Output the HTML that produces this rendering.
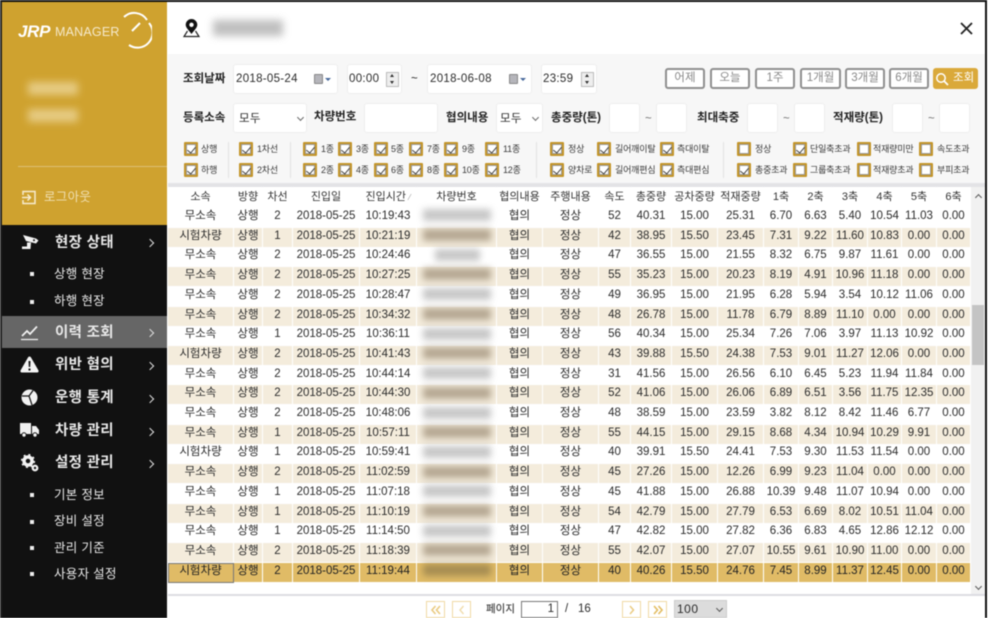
<!DOCTYPE html>
<html lang="ko"><head><meta charset="utf-8"><title>JRP Manager</title>
<style>
*{box-sizing:border-box;margin:0;padding:0}
html,body{width:989px;height:618px;overflow:hidden;background:#fff}
body{position:relative;font:11.5px "Liberation Sans","Noto Sans CJK KR",sans-serif;color:#2b2b2b}
#w{position:absolute;left:0;top:0;width:989px;height:618px;overflow:hidden;filter:blur(.4px)}
#w div,#w span,#w b,#w svg{position:absolute}
.m{left:55px;color:#e8e8e8;font-size:14.5px;font-weight:700;line-height:20px;white-space:nowrap;letter-spacing:.3px}
.s{left:54px;color:#e8e8e8;font-size:12.5px;line-height:18px;white-space:nowrap;letter-spacing:.3px}
.d{left:30px;width:4px;height:4px;background:#eee}
.c{left:147px;width:6px;height:6px;border-top:1.6px solid #ddd;border-right:1.6px solid #ddd;transform:rotate(45deg)}
.f{background:#fff;border:1px solid #eee;border-radius:3px}
.l{font-weight:700;font-size:11.5px;line-height:16px;color:#222;white-space:nowrap}
.v{font-size:11.5px;line-height:16px;color:#2b2b2b;white-space:nowrap;letter-spacing:.3px}
.b{top:68px;height:21px;border:2px solid #8f8f8f;border-radius:3px;background:#fff;color:#888;font-size:11.5px;line-height:17px;text-align:center}
.k{width:14px;height:14px;border:2px solid #c4952a;background:#fff;border-radius:1px;box-shadow:inset 0 0 0 1px #999}
.k.o:after{content:"";position:absolute;left:3px;top:.5px;width:4px;height:7px;border-right:1.3px solid #444;border-bottom:1.3px solid #444;transform:rotate(40deg)}
.t{font-size:9px;line-height:12px;color:#3a3a3a;white-space:nowrap;letter-spacing:-.2px}
.vl{top:142px;width:1px;height:36px;background:#e2e2e2}
.h,.r{left:168px;width:803px;height:20px;display:flex}
.h i,.r i{display:block;font-style:normal;text-align:center;line-height:17px;border-right:1px solid #fff;border-bottom:1px solid #fff;overflow:hidden;white-space:nowrap;flex:none;color:#2b2b2b}
.h i{font-size:11px;line-height:20px;color:#333}
.r.e i{background:#f4ecdc}
.r.x i{background:#e0bb66;color:#222}
i:nth-child(1){width:66px}i:nth-child(2){width:29px}i:nth-child(3){width:30px}i:nth-child(4){width:67px}i:nth-child(5){width:57px}i:nth-child(6){width:80px}i:nth-child(7){width:46px}i:nth-child(8){width:56px}i:nth-child(9){width:32px}i:nth-child(10){width:41px}i:nth-child(11){width:46px}i:nth-child(12){width:46px}i:nth-child(13){width:35px}i:nth-child(14){width:34px}i:nth-child(15){width:35px}i:nth-child(16){width:34px}i:nth-child(17){width:35px}i:nth-child(18){width:34px}
.bl{left:423px;width:68px;height:12px;background:#b0b0b0;filter:blur(3.5px);opacity:.7}
.t2{background:#9c8c74}
.pg{top:601px;width:19px;height:17px;border:1.5px solid #f0d9a4;background:#fff}
.pg svg{left:4px;top:3px}
</style></head><body><div id="w">

<div style="left:0;top:0;width:985px;height:2px;background:#111"></div>
<div style="left:0;top:0;width:2px;height:618px;background:#222"></div>
<div style="left:985px;top:0;width:2px;height:618px;background:#111"></div>

<!-- sidebar -->
<div style="left:2px;top:2px;width:165px;height:616px;background:#111"></div>
<div style="left:2px;top:2px;width:165px;height:223px;background:#cfa22f"></div>
<span style="left:18px;top:21px;color:#fff;font:italic 700 17px/22px 'Liberation Sans',sans-serif;letter-spacing:-.3px">JRP</span>
<span style="left:55px;top:23px;color:#f5e9cb;font-size:12.5px;line-height:18px;letter-spacing:.2px">MANAGER</span>
<svg style="left:120px;top:10px" width="32" height="40" viewBox="0 0 32 40"><path d="M4 7A15 15 0 0 1 27 10M29 13A15 15 0 0 1 9 35" fill="none" stroke="#fff" stroke-width="2"/><path d="M12 21L20 13" stroke="#fff" stroke-width="2"/></svg>
<div style="left:28px;top:82px;width:50px;height:13px;background:#eed9a0;filter:blur(4px);opacity:.75"></div>
<div style="left:28px;top:109px;width:50px;height:13px;background:#eed9a0;filter:blur(4px);opacity:.75"></div>
<div style="left:18px;top:166px;width:149px;height:1px;background:#dcbf75"></div>
<svg style="left:21px;top:190px" width="16" height="15" viewBox="0 0 16 15"><path d="M2 5V1.500H14V13.500H2V10M1 7.500H9M6.500 4.500L9.500 7.500L6.500 10.500" fill="none" stroke="#f7eccf" stroke-width="1.500"/></svg>
<span style="left:44px;top:189px;color:#f0dfb2;font-size:12.500px;line-height:17px;letter-spacing:.3px">로그아웃</span>

<svg style="left:21px;top:234px" width="18" height="17" viewBox="0 0 18 17"><path d="M2 1L15 4.500L17.500 6.500L15 9.500L5 7Z" fill="#f2f2f2"/><path d="M6 8.500H10L9.500 15H1V12.500H6Z" fill="#f2f2f2"/><circle cx="13" cy="6.300" r="1" fill="#111"/></svg>
<span class="m" style="top:233px">현장 상태</span><div class="c" style="top:240px"></div>
<div class="d" style="top:272px"></div><span class="s" style="top:265px">상행 현장</span>
<div class="d" style="top:300px"></div><span class="s" style="top:292px">하행 현장</span>

<div style="left:2px;top:316px;width:165px;height:32px;background:#666"></div>
<svg style="left:20px;top:325px" width="19" height="16" viewBox="0 0 19 16"><path d="M2 11L7 6L10 9L17 1.500" fill="none" stroke="#f2f2f2" stroke-width="1.700"/><path d="M1 14.500H18" stroke="#f2f2f2" stroke-width="1.300"/></svg>
<span class="m" style="top:323px">이력 조회</span><div class="c" style="top:330px"></div>

<svg style="left:20px;top:356px" width="19" height="17" viewBox="0 0 19 17"><path d="M9.500 .5Q10.500 .5 11 1.500L18.500 14.500Q19 16.500 17 16.500H2Q0 16.500 .5 14.500L8 1.500Q8.500 .5 9.500 .5Z" fill="#f4f4f4"/><path d="M8.500 5H10.500L10.200 11H8.800ZM8.500 12.500H10.500V14.500H8.500Z" fill="#111"/></svg>
<span class="m" style="top:355px">위반 혐의</span><div class="c" style="top:363px"></div>

<svg style="left:21px;top:389px" width="17" height="17" viewBox="0 0 17 17"><circle cx="8.500" cy="8.500" r="8" fill="#f2f2f2"/><path d="M1 7H8L12 1.500M8 7L11 16" fill="none" stroke="#111" stroke-width="1.200"/></svg>
<span class="m" style="top:388px">운행 통계</span><div class="c" style="top:396px"></div>

<svg style="left:20px;top:423px" width="19" height="15" viewBox="0 0 19 15"><path d="M0 0H11V11H0ZM12 3H16L19 7V11H12Z" fill="#f2f2f2"/><circle cx="4" cy="12" r="2.200" fill="#f2f2f2" stroke="#111"/><circle cx="15" cy="12" r="2.200" fill="#f2f2f2" stroke="#111"/></svg>
<span class="m" style="top:421px">차량 관리</span><div class="c" style="top:429px"></div>

<svg style="left:21px;top:454px" width="18" height="18" viewBox="0 0 18 18"><circle cx="7" cy="7" r="4" fill="none" stroke="#f2f2f2" stroke-width="3.500"/><circle cx="7" cy="7" r="6.200" fill="none" stroke="#f2f2f2" stroke-width="1.800" stroke-dasharray="2 2.900"/><circle cx="14" cy="14" r="2.300" fill="none" stroke="#f2f2f2" stroke-width="2.200"/></svg>
<span class="m" style="top:453px">설정 관리</span><div class="c" style="top:461px"></div>
<div class="d" style="top:493px"></div><span class="s" style="top:486px">기본 정보</span>
<div class="d" style="top:520px"></div><span class="s" style="top:512px">장비 설정</span>
<div class="d" style="top:546px"></div><span class="s" style="top:539px">관리 기준</span>
<div class="d" style="top:572px"></div><span class="s" style="top:565px">사용자 설정</span>

<!-- header -->
<svg style="left:183px;top:18px" width="17" height="20" viewBox="0 0 17 20"><path d="M8.500 1A5.800 5.800 0 0 0 2.700 6.800C2.700 10 6.500 13 8.500 16C10.500 13 14.300 10 14.300 6.800A5.800 5.800 0 0 0 8.500 1Z" fill="#111"/><circle cx="8.500" cy="6.800" r="2.200" fill="#fff"/><path d="M4.500 13L1 18.500H16L12.500 13" fill="none" stroke="#222" stroke-width="1.200"/></svg>
<div style="left:213px;top:20px;width:70px;height:16px;background:#aaa;filter:blur(4px);opacity:.75"></div>
<svg style="left:960px;top:22px" width="13" height="13" viewBox="0 0 13 13"><path d="M1 1L12 12M12 1L1 12" stroke="#222" stroke-width="1.800"/></svg>

<!-- filter -->
<div style="left:168px;top:54px;width:817px;height:129px;background:#f7f7f7"></div>
<div style="left:168px;top:183px;width:817px;height:4px;background:#e3e3e6"></div>

<span class="l" style="left:183px;top:71px">조회날짜</span>
<div class="f" style="left:233px;top:64px;width:105px;height:30px"></div><span class="v" style="left:236px;top:71px">2018-05-24</span>
<div style="left:314px;top:74px;width:9px;height:10px;background:#b5b5bb;border:1px solid #888;border-radius:1px"></div><div style="left:325px;top:78px;border-left:3px solid transparent;border-right:3px solid transparent;border-top:3px solid #46679a"></div>
<div class="f" style="left:347px;top:64px;width:55px;height:30px"></div><span class="v" style="left:349px;top:71px">00:00</span>
<div style="left:386px;top:72px;width:13px;height:15px;background:#eee;border:1px solid #bbb"></div><div style="left:390px;top:74px;border-left:2.500px solid transparent;border-right:2.500px solid transparent;border-bottom:3px solid #333"></div><div style="left:390px;top:81px;border-left:2.500px solid transparent;border-right:2.500px solid transparent;border-top:3px solid #333"></div>
<span class="v" style="left:411px;top:71px">~</span>
<div class="f" style="left:427px;top:64px;width:105px;height:30px"></div><span class="v" style="left:430px;top:71px">2018-06-08</span>
<div style="left:509px;top:74px;width:9px;height:10px;background:#b5b5bb;border:1px solid #888;border-radius:1px"></div><div style="left:520px;top:78px;border-left:3px solid transparent;border-right:3px solid transparent;border-top:3px solid #46679a"></div>
<div class="f" style="left:541px;top:64px;width:56px;height:30px"></div><span class="v" style="left:543px;top:71px">23:59</span>
<div style="left:581px;top:72px;width:13px;height:15px;background:#eee;border:1px solid #bbb"></div><div style="left:585px;top:74px;border-left:2.500px solid transparent;border-right:2.500px solid transparent;border-bottom:3px solid #333"></div><div style="left:585px;top:81px;border-left:2.500px solid transparent;border-right:2.500px solid transparent;border-top:3px solid #333"></div>

<div class="b" style="left:665px;width:40px">어제</div>
<div class="b" style="left:710px;width:40px">오늘</div>
<div class="b" style="left:755px;width:40px">1주</div>
<div class="b" style="left:800px;width:41px">1개월</div>
<div class="b" style="left:845px;width:40px">3개월</div>
<div class="b" style="left:889px;width:40px">6개월</div>
<div style="left:933px;top:68px;width:45px;height:21px;background:#daa93a;border-radius:3px"></div>
<svg style="left:935px;top:72px" width="14" height="14" viewBox="0 0 14 14"><circle cx="6" cy="6" r="4.200" fill="none" stroke="#fff" stroke-width="1.500"/><path d="M9 9L13 13" stroke="#fff" stroke-width="1.700"/></svg>
<span style="left:953px;top:70px;color:#fff;font-size:11.500px;line-height:17px">조회</span>

<span class="l" style="left:183px;top:110px">등록소속</span>
<div class="f" style="left:233px;top:103px;width:74px;height:30px"></div><span class="v" style="left:239px;top:111px">모두</span>
<div style="left:298px;top:115px;width:5px;height:5px;border-right:1px solid #666;border-bottom:1px solid #666;transform:rotate(45deg)"></div>
<span class="l" style="left:314px;top:109px">차량번호</span>
<div class="f" style="left:364px;top:103px;width:74px;height:30px"></div>
<span class="l" style="left:446px;top:110px">협의내용</span>
<div class="f" style="left:496px;top:103px;width:47px;height:30px"></div><span class="v" style="left:500px;top:111px">모두</span>
<div style="left:533px;top:115px;width:5px;height:5px;border-right:1px solid #666;border-bottom:1px solid #666;transform:rotate(45deg)"></div>
<span class="l" style="left:551px;top:110px">총중량(톤)</span>
<div class="f" style="left:609px;top:103px;width:31px;height:30px"></div><span class="v" style="left:645px;top:111px;color:#777">~</span>
<div class="f" style="left:656px;top:103px;width:31px;height:30px"></div>
<span class="l" style="left:697px;top:110px">최대축중</span>
<div class="f" style="left:747px;top:103px;width:31px;height:30px"></div><span class="v" style="left:783px;top:111px;color:#777">~</span>
<div class="f" style="left:794px;top:103px;width:31px;height:30px"></div>
<span class="l" style="left:833px;top:110px">적재량(톤)</span>
<div class="f" style="left:892px;top:103px;width:31px;height:30px"></div><span class="v" style="left:928px;top:111px;color:#777">~</span>
<div class="f" style="left:939px;top:103px;width:31px;height:30px"></div>

<div class="vl" style="left:228px"></div><div class="vl" style="left:290px"></div><div class="vl" style="left:536px"></div><div class="vl" style="left:723px"></div>

<div class="k o" style="left:184px;top:142px"></div><span class="t" style="left:201px;top:143px">상행</span>
<div class="k o" style="left:184px;top:163px"></div><span class="t" style="left:201px;top:164px">하행</span>
<div class="k o" style="left:239px;top:142px"></div><span class="t" style="left:257px;top:143px">1차선</span>
<div class="k o" style="left:239px;top:163px"></div><span class="t" style="left:257px;top:164px">2차선</span>
<div class="k o" style="left:303px;top:142px"></div><span class="t" style="left:321px;top:143px">1종</span>
<div class="k o" style="left:303px;top:163px"></div><span class="t" style="left:321px;top:164px">2종</span>
<div class="k o" style="left:338px;top:142px"></div><span class="t" style="left:356px;top:143px">3종</span>
<div class="k o" style="left:338px;top:163px"></div><span class="t" style="left:356px;top:164px">4종</span>
<div class="k o" style="left:374px;top:142px"></div><span class="t" style="left:391px;top:143px">5종</span>
<div class="k o" style="left:374px;top:163px"></div><span class="t" style="left:391px;top:164px">6종</span>
<div class="k o" style="left:409px;top:142px"></div><span class="t" style="left:427px;top:143px">7종</span>
<div class="k o" style="left:409px;top:163px"></div><span class="t" style="left:427px;top:164px">8종</span>
<div class="k o" style="left:444px;top:142px"></div><span class="t" style="left:462px;top:143px">9종</span>
<div class="k o" style="left:444px;top:163px"></div><span class="t" style="left:462px;top:164px">10종</span>
<div class="k o" style="left:485px;top:142px"></div><span class="t" style="left:503px;top:143px">11종</span>
<div class="k o" style="left:485px;top:163px"></div><span class="t" style="left:503px;top:164px">12종</span>
<div class="k o" style="left:550px;top:142px"></div><span class="t" style="left:568px;top:143px">정상</span>
<div class="k o" style="left:550px;top:163px"></div><span class="t" style="left:568px;top:164px">양차로</span>
<div class="k o" style="left:597px;top:142px"></div><span class="t" style="left:615px;top:143px">길어깨이탈</span>
<div class="k o" style="left:597px;top:163px"></div><span class="t" style="left:615px;top:164px">길어깨편심</span>
<div class="k o" style="left:660px;top:142px"></div><span class="t" style="left:677px;top:143px">측대이탈</span>
<div class="k o" style="left:660px;top:163px"></div><span class="t" style="left:677px;top:164px">측대편심</span>
<div class="k" style="left:737px;top:142px"></div><span class="t" style="left:755px;top:143px">정상</span>
<div class="k o" style="left:737px;top:163px"></div><span class="t" style="left:755px;top:164px">총중초과</span>
<div class="k o" style="left:793px;top:142px"></div><span class="t" style="left:810px;top:143px">단일축초과</span>
<div class="k" style="left:793px;top:163px"></div><span class="t" style="left:810px;top:164px">그룹축초과</span>
<div class="k" style="left:857px;top:142px"></div><span class="t" style="left:873px;top:143px">적재량미만</span>
<div class="k" style="left:857px;top:163px"></div><span class="t" style="left:873px;top:164px">적재량초과</span>
<div class="k" style="left:919px;top:142px"></div><span class="t" style="left:937px;top:143px">속도초과</span>
<div class="k" style="left:919px;top:163px"></div><span class="t" style="left:937px;top:164px">부피초과</span>

<!-- table -->
<div class="h" style="top:187px"><i>소속</i><i>방향</i><i>차선</i><i>진입일</i><i>진입시간 <small style="font-size:8px;color:#999">⁄</small></i><i>차량번호</i><i>협의내용</i><i>주행내용</i><i>속도</i><i>총중량</i><i>공차중량</i><i>적재중량</i><i>1축</i><i>2축</i><i>3축</i><i>4축</i><i>5축</i><i>6축</i></div>

<div class="r" style="top:208px"><i>무소속</i><i>상행</i><i>2</i><i>2018-05-25</i><i>10:19:43</i><i></i><i>협의</i><i>정상</i><i>52</i><i>40.31</i><i>15.00</i><i>25.31</i><i>6.70</i><i>6.63</i><i>5.40</i><i>10.54</i><i>11.03</i><i>0.00</i></div>
<div class="r e" style="top:227.7px"><i>시험차량</i><i>상행</i><i>1</i><i>2018-05-25</i><i>10:21:19</i><i></i><i>협의</i><i>정상</i><i>42</i><i>38.95</i><i>15.50</i><i>23.45</i><i>7.31</i><i>9.22</i><i>11.60</i><i>10.83</i><i>0.00</i><i>0.00</i></div>
<div class="r" style="top:247.4px"><i>무소속</i><i>상행</i><i>2</i><i>2018-05-25</i><i>10:24:46</i><i></i><i>협의</i><i>정상</i><i>47</i><i>36.55</i><i>15.00</i><i>21.55</i><i>8.32</i><i>6.75</i><i>9.87</i><i>11.61</i><i>0.00</i><i>0.00</i></div>
<div class="r e" style="top:267.1px"><i>무소속</i><i>상행</i><i>2</i><i>2018-05-25</i><i>10:27:25</i><i></i><i>협의</i><i>정상</i><i>55</i><i>35.23</i><i>15.00</i><i>20.23</i><i>8.19</i><i>4.91</i><i>10.96</i><i>11.18</i><i>0.00</i><i>0.00</i></div>
<div class="r" style="top:286.8px"><i>무소속</i><i>상행</i><i>2</i><i>2018-05-25</i><i>10:28:47</i><i></i><i>협의</i><i>정상</i><i>49</i><i>36.95</i><i>15.00</i><i>21.95</i><i>6.28</i><i>5.94</i><i>3.54</i><i>10.12</i><i>11.06</i><i>0.00</i></div>
<div class="r e" style="top:306.5px"><i>무소속</i><i>상행</i><i>2</i><i>2018-05-25</i><i>10:34:32</i><i></i><i>협의</i><i>정상</i><i>48</i><i>26.78</i><i>15.00</i><i>11.78</i><i>6.79</i><i>8.89</i><i>11.10</i><i>0.00</i><i>0.00</i><i>0.00</i></div>
<div class="r" style="top:326.2px"><i>무소속</i><i>상행</i><i>1</i><i>2018-05-25</i><i>10:36:11</i><i></i><i>협의</i><i>정상</i><i>56</i><i>40.34</i><i>15.00</i><i>25.34</i><i>7.26</i><i>7.06</i><i>3.97</i><i>11.13</i><i>10.92</i><i>0.00</i></div>
<div class="r e" style="top:345.9px"><i>시험차량</i><i>상행</i><i>2</i><i>2018-05-25</i><i>10:41:43</i><i></i><i>협의</i><i>정상</i><i>43</i><i>39.88</i><i>15.50</i><i>24.38</i><i>7.53</i><i>9.01</i><i>11.27</i><i>12.06</i><i>0.00</i><i>0.00</i></div>
<div class="r" style="top:365.6px"><i>무소속</i><i>상행</i><i>2</i><i>2018-05-25</i><i>10:44:14</i><i></i><i>협의</i><i>정상</i><i>31</i><i>41.56</i><i>15.00</i><i>26.56</i><i>6.10</i><i>6.45</i><i>5.23</i><i>11.94</i><i>11.84</i><i>0.00</i></div>
<div class="r e" style="top:385.3px"><i>무소속</i><i>상행</i><i>2</i><i>2018-05-25</i><i>10:44:30</i><i></i><i>협의</i><i>정상</i><i>52</i><i>41.06</i><i>15.00</i><i>26.06</i><i>6.89</i><i>6.51</i><i>3.56</i><i>11.75</i><i>12.35</i><i>0.00</i></div>
<div class="r" style="top:405px"><i>무소속</i><i>상행</i><i>2</i><i>2018-05-25</i><i>10:48:06</i><i></i><i>협의</i><i>정상</i><i>48</i><i>38.59</i><i>15.00</i><i>23.59</i><i>3.82</i><i>8.12</i><i>8.42</i><i>11.46</i><i>6.77</i><i>0.00</i></div>
<div class="r e" style="top:424.7px"><i>무소속</i><i>상행</i><i>1</i><i>2018-05-25</i><i>10:57:11</i><i></i><i>협의</i><i>정상</i><i>55</i><i>44.15</i><i>15.00</i><i>29.15</i><i>8.68</i><i>4.34</i><i>10.94</i><i>10.29</i><i>9.91</i><i>0.00</i></div>
<div class="r" style="top:444.4px"><i>시험차량</i><i>상행</i><i>1</i><i>2018-05-25</i><i>10:59:41</i><i></i><i>협의</i><i>정상</i><i>40</i><i>39.91</i><i>15.50</i><i>24.41</i><i>7.53</i><i>9.30</i><i>11.53</i><i>11.54</i><i>0.00</i><i>0.00</i></div>
<div class="r e" style="top:464.1px"><i>무소속</i><i>상행</i><i>2</i><i>2018-05-25</i><i>11:02:59</i><i></i><i>협의</i><i>정상</i><i>45</i><i>27.26</i><i>15.00</i><i>12.26</i><i>6.99</i><i>9.23</i><i>11.04</i><i>0.00</i><i>0.00</i><i>0.00</i></div>
<div class="r" style="top:483.8px"><i>무소속</i><i>상행</i><i>1</i><i>2018-05-25</i><i>11:07:18</i><i></i><i>협의</i><i>정상</i><i>45</i><i>41.88</i><i>15.00</i><i>26.88</i><i>10.39</i><i>9.48</i><i>11.07</i><i>10.94</i><i>0.00</i><i>0.00</i></div>
<div class="r e" style="top:503.5px"><i>무소속</i><i>상행</i><i>1</i><i>2018-05-25</i><i>11:10:19</i><i></i><i>협의</i><i>정상</i><i>54</i><i>42.79</i><i>15.00</i><i>27.79</i><i>6.53</i><i>6.69</i><i>8.02</i><i>10.51</i><i>11.04</i><i>0.00</i></div>
<div class="r" style="top:523.2px"><i>무소속</i><i>상행</i><i>1</i><i>2018-05-25</i><i>11:14:50</i><i></i><i>협의</i><i>정상</i><i>47</i><i>42.82</i><i>15.00</i><i>27.82</i><i>6.36</i><i>6.83</i><i>4.65</i><i>12.86</i><i>12.12</i><i>0.00</i></div>
<div class="r e" style="top:542.9px"><i>무소속</i><i>상행</i><i>2</i><i>2018-05-25</i><i>11:18:39</i><i></i><i>협의</i><i>정상</i><i>55</i><i>42.07</i><i>15.00</i><i>27.07</i><i>10.55</i><i>9.61</i><i>10.90</i><i>11.00</i><i>0.00</i><i>0.00</i></div>
<div class="r x" style="top:562.6px"><i style="outline:1px solid #777;outline-offset:-1px">시험차량</i><i>상행</i><i>2</i><i>2018-05-25</i><i>11:19:44</i><i></i><i>협의</i><i>정상</i><i>40</i><i>40.26</i><i>15.50</i><i>24.76</i><i>7.45</i><i>8.99</i><i>11.37</i><i>12.45</i><i>0.00</i><i>0.00</i></div>

<!-- blurred plate numbers -->
<div class="bl" style="top:209px"></div><div class="bl t2" style="top:229px"></div><div class="bl" style="top:249px;left:435px;width:45px"></div><div class="bl t2" style="top:268px"></div><div class="bl" style="top:288px"></div><div class="bl t2" style="top:308px"></div><div class="bl" style="top:328px"></div><div class="bl t2" style="top:347px"></div><div class="bl" style="top:367px"></div><div class="bl t2" style="top:387px"></div><div class="bl" style="top:407px"></div><div class="bl t2" style="top:426px"></div><div class="bl" style="top:446px"></div><div class="bl t2" style="top:466px"></div><div class="bl" style="top:485px"></div><div class="bl t2" style="top:505px"></div><div class="bl" style="top:525px"></div><div class="bl t2" style="top:544px"></div><div class="bl" style="top:564px;background:#8f7a4a"></div>

<!-- scrollbar -->
<div style="left:971px;top:187px;width:14px;height:407px;background:#f1f1f1"></div>
<div style="left:972px;top:305px;width:12px;height:60px;background:#c4c4c4"></div>
<div style="left:976px;top:195px;width:5px;height:5px;border-left:1.200px solid #555;border-top:1.200px solid #555;transform:rotate(45deg)"></div>
<div style="left:976px;top:584px;width:5px;height:5px;border-right:1.200px solid #555;border-bottom:1.200px solid #555;transform:rotate(45deg)"></div>

<!-- pagination -->
<div style="left:168px;top:594px;width:817px;height:2px;background:#dcdce2"></div>
<div class="pg" style="left:426px"><svg width="10" height="10" viewBox="0 0 10 10"><path d="M4.500 1L1 5L4.500 9M9 1L5.500 5L9 9" fill="none" stroke="#eacb82" stroke-width="1.600"/></svg></div>
<div class="pg" style="left:452px"><svg width="10" height="10" viewBox="0 0 10 10"><path d="M6.500 1L3 5L6.500 9" fill="none" stroke="#f0dcac" stroke-width="1.400"/></svg></div>
<span style="left:486px;top:602px;font-size:10.500px;line-height:14px;font-weight:500;color:#444">페이지</span>
<div style="left:521px;top:601px;width:37px;height:17px;background:#fff;border:1px solid #777;text-align:right;padding-right:3px;line-height:14px">1</div>
<span style="left:565px;top:602px;line-height:14px">/</span>
<span style="left:578px;top:602px;line-height:14px">16</span>
<div class="pg" style="left:622px"><svg width="10" height="10" viewBox="0 0 10 10"><path d="M3 1L6.500 5L3 9" fill="none" stroke="#eacb82" stroke-width="1.500"/></svg></div>
<div class="pg" style="left:648px"><svg width="10" height="10" viewBox="0 0 10 10"><path d="M1 1L4.500 5L1 9M5.500 1L9 5L5.500 9" fill="none" stroke="#e3bd62" stroke-width="1.600"/></svg></div>
<div style="left:674px;top:600px;width:53px;height:18px;background:#dcdcdc;border:1px solid #ccc"></div>
<span style="left:677px;top:602px;line-height:14px;font-size:12px;letter-spacing:.5px">100</span>
<div style="left:717px;top:606px;width:5px;height:5px;border-right:1.200px solid #555;border-bottom:1.200px solid #555;transform:rotate(45deg)"></div>

</div></body></html>
